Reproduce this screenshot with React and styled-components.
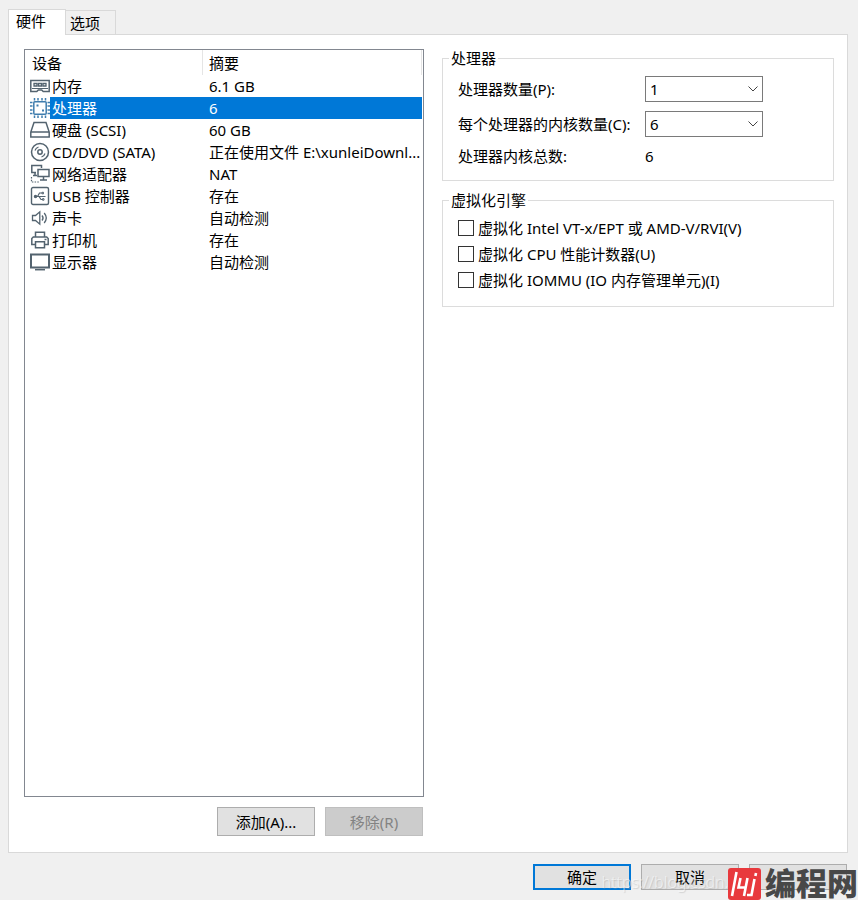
import React, { useState } from 'react';
import styled, { createGlobalStyle, css } from 'styled-components';

const GlobalStyles = createGlobalStyle`
  * {
    box-sizing: border-box;
  }
  body {
    margin: 0;
    background-color: #f0f0f0;
  }
  body,
  button,
  select {
    font-family: 'Noto Sans', 'Noto Sans CJK SC', sans-serif;
    font-size: 15px;
    font-weight: 400;
    line-height: 20px;
    color: #000;
  }
`;

const Dialog = styled.main`
  position: relative;
  display: flex;
  flex-direction: column;
  min-height: 100vh;
  padding: 9px 10px 10px 8px;
`;

const TabList = styled.div`
  display: flex;
  align-items: flex-end;
`;

const Tab = styled.button`
  height: 24px;
  padding: 0 15px 0 4px;
  border: 1px solid #d9d9d9;
  border-left: none;
  border-bottom: none;
  background-color: #f0f0f0;
  ${({ $active }) =>
    $active &&
    css`
      z-index: 1;
      height: 26px;
      margin-bottom: -1px;
      padding: 0 19px 3px 7px;
      border-left: 1px solid #d9d9d9;
      background-color: #fff;
    `}
`;

const Panel = styled.section`
  flex: 1;
  display: grid;
  grid-template-columns: minmax(0, 50fr) minmax(0, 49fr);
  gap: 18px;
  padding: 14px 13px 16px 15px;
  border: 1px solid #d9d9d9;
  background-color: #fff;
`;

const DeviceColumn = styled.div`
  display: flex;
  flex-direction: column;
  gap: 10px;
`;

const DeviceList = styled.div`
  flex: 1;
  padding-right: 1px;
  border: 1px solid #828790;
`;

const DeviceTable = styled.table`
  width: 100%;
  table-layout: fixed;
  border-spacing: 0;
  .col-icon {
    width: 25px;
  }
  .col-name {
    width: 153px;
  }
  th {
    height: 25px;
    padding: 0 7px;
    border-right: 1px solid #e5e5e5;
    font-weight: 400;
    text-align: left;
  }
  th + th {
    padding: 0 6px;
  }
`;

const DeviceRow = styled.tr`
  cursor: default;
  td {
    height: 22px;
    padding: 0 0 1px 6px;
    overflow: hidden;
    white-space: nowrap;
    text-overflow: ellipsis;
  }
  td:nth-child(1) {
    padding: 0 0 0 5px;
  }
  td:nth-child(2) {
    padding-left: 2px;
  }
  ${({ $selected }) =>
    $selected &&
    css`
      td:not(:first-child) {
        background-color: #0078d7;
        color: #fff;
      }
    `}
`;

const Icon = styled.svg`
  display: block;
  width: 20px;
  height: 20px;
  fill: none;
  stroke: ${({ $color }) => $color || '#53636f'};
  stroke-width: 1.5;
`;

const ButtonRow = styled.div`
  display: flex;
  justify-content: flex-end;
  gap: 10px;
  margin-right: 1px;
`;

const Footer = styled(ButtonRow)`
  margin-top: 11px;
`;

const Button = styled.button`
  width: 98px;
  height: ${({ $tall }) => ($tall ? '29px' : '26px')};
  padding: 0;
  border: ${({ $primary }) =>
    $primary ? '2px solid #0078d7' : '1px solid #adadad'};
  background-color: #e1e1e1;
  &:disabled {
    border-color: #bfbfbf;
    background-color: #ccc;
    color: #838383;
  }
`;

const Settings = styled.div`
  display: flex;
  flex-direction: column;
  gap: 9px;
  margin-top: -1px;
`;

const Group = styled.fieldset`
  min-width: 0;
  margin: 0;
  padding: 0 6px 13px;
  border: 1px solid #dcdcdc;
  legend {
    padding: 0 2px;
  }
`;

const Fields = styled.div`
  display: grid;
  grid-template-columns: 187px 118px;
  align-items: center;
  row-gap: 9px;
  padding: 8px 0 1px 9px;
  white-space: nowrap;
`;

const SelectBox = styled.div`
  display: grid;
  align-items: center;
  select,
  svg {
    grid-area: 1 / 1;
  }
  select {
    appearance: none;
    width: 100%;
    height: 26px;
    padding: 0 24px 0 4px;
    border: 1px solid #7a7a7a;
    border-radius: 0;
    background-color: #fff;
  }
  svg {
    justify-self: end;
    margin-right: 5px;
    pointer-events: none;
  }
`;

const CheckList = styled.div`
  padding: 5px 0 0 9px;
`;

const CheckLabel = styled.label`
  display: flex;
  align-items: center;
  gap: 4px;
  min-height: 26px;
  input {
    appearance: none;
    flex: none;
    width: 16px;
    height: 16px;
    margin: 0;
    border: 1px solid #333;
    background-color: #fff;
  }
  input:checked {
    background-color: #0078d7;
    box-shadow: inset 0 0 0 2px #fff;
  }
`;

const Watermark = styled.div`
  position: absolute;
  right: 120px;
  bottom: 8px;
  font-size: 16px;
  font-weight: 300;
  color: rgba(255, 255, 255, 0.6);
  text-shadow: 1px 1px 1px rgba(150, 150, 150, 0.4);
  pointer-events: none;
`;

const Brand = styled.div`
  position: absolute;
  right: 0;
  bottom: 0;
  display: flex;
  gap: 4px;
  height: 32px;
  font-family: 'Noto Sans CJK SC', sans-serif;
  font-size: 31px;
  font-weight: 900;
  line-height: 28px;
  color: #484848;
  pointer-events: none;
`;

const drawings = {
  memory: (
    <>
      <path d="M.8 4.5h18.4v11h-6L11.7 14H8.3l-1.5 1.5h-6z" />
      <path
        d="M4 7.5h3V10H4zM8.500 7.5h3V10h-3zM13 7.5h3V10h-3z"
        strokeWidth="1.3"
      />
      <path d="M2 12.5h16" strokeWidth="1" />
    </>
  ),
  cpu: (
    <>
      <rect x="3.8" y="3.8" width="12.4" height="12.4" rx="1" />
      <path d="M4.5 0v2.5M8 0v2.5M12 0v2.5M15.5 0v2.5M4.5 17.5V20M8 17.5V20M12 17.5V20M15.5 17.5V20M0 4.5h2.5M0 8h2.5M0 12h2.5M0 15.5h2.5M17.5 4.5H20M17.5 8H20M17.5 12H20M17.5 15.5H20" />
      <path d="M6.5 7.5h2M12 12.5h2" strokeWidth="2" />
    </>
  ),
  disk: <path d="M4 2.5h12l3.2 9.5v5H.8v-5zM.8 12h18.4" />,
  disc: (
    <>
      <circle cx="10" cy="10" r="8.5" />
      <circle cx="10" cy="10" r="2.2" />
      <path
        d="M5 8.500c.5-1.800 1.800-3 3.500-3.500M15 11.500c-.5 1.800-1.800 3-3.500 3.500"
        strokeWidth="1.2"
      />
    </>
  ),
  network: (
    <>
      <path d="M11.5 4V1.5H1.800v7H6M5 8.500V11M3 11.500h4" />
      <path d="M8 5.500h11v7H8zM13.500 12.500V16M10 16h7" />
      <path d="M1.500 13v5h8" strokeWidth="1.2" strokeDasharray="1.5 1.2" />
    </>
  ),
  usb: (
    <>
      <rect x="1.5" y="1.5" width="17" height="17" rx="1.5" strokeWidth="1.4" />
      <path d="M5 10.500h10.500M7.500 10.500l2-3.500H12M9 10.500l2 3h2" strokeWidth="1.2" />
      <path
        d="M12 6.300h1.500v1.500H12zM12.500 12.700H14v1.500h-1.500z"
        strokeWidth="1"
      />
      <circle cx="5.5" cy="10.5" r="1" />
    </>
  ),
  sound: (
    <path
      d="M2.500 7.500v5h3l4.300 3.700V3.800L5.500 7.500zM12 7.500c1.300 1.500 1.300 3.500 0 5M14.200 5c2.500 3 2.500 7 0 10"
      strokeWidth="1.3"
    />
  ),
  printer: (
    <>
      <path d="M5.500 7V2.300h9V7M5.500 14.500H1.800v-6L3.300 7h13.400l1.500 1.500v6h-3.700" />
      <path d="M5.500 11.800h9v5.900h-9zM14.500 9.500h2" />
    </>
  ),
  display: (
    <>
      <path d="M1 2.500h18v13H1z" strokeWidth="2" />
      <path d="M5 17.700h10" />
    </>
  ),
};

const devices = [
  { icon: 'memory', name: '内存', summary: '6.1 GB' },
  { icon: 'cpu', name: '处理器', summary: '6', color: '#3f7dae' },
  { icon: 'disk', name: '硬盘 (SCSI)', summary: '60 GB' },
  {
    icon: 'disc',
    name: 'CD/DVD (SATA)',
    summary: '正在使用文件 E:\\xunleiDownl...',
  },
  { icon: 'network', name: '网络适配器', summary: 'NAT' },
  { icon: 'usb', name: 'USB 控制器', summary: '存在' },
  { icon: 'sound', name: '声卡', summary: '自动检测' },
  { icon: 'printer', name: '打印机', summary: '存在' },
  { icon: 'display', name: '显示器', summary: '自动检测' },
];

const engineOptions = [
  '虚拟化 Intel VT-x/EPT 或 AMD-V/RVI(V)',
  '虚拟化 CPU 性能计数器(U)',
  '虚拟化 IOMMU (IO 内存管理单元)(I)',
];

function Select({ id, value, onChange, options }) {
  return (
    <SelectBox>
      <select
        id={id}
        value={value}
        onChange={(e) => onChange(Number(e.target.value))}
      >
        {options.map((n) => (
          <option key={n}>{n}</option>
        ))}
      </select>
      <svg width="10" height="6" viewBox="0 0 10 6" fill="none" stroke="#444">
        <path d="M.5.5L5 5 9.5.5" />
      </svg>
    </SelectBox>
  );
}

function BrandMark() {
  return (
    <svg width="33" height="32" viewBox="0 0 33 32">
      <rect width="33" height="32" rx="3" fill="#e8393d" />
      <g fill="none" stroke="#fff" strokeWidth="2.6">
        <path d="M8.500 4L4 28M12.500 10l-2 9.500h6.500M19.500 10L16 28M26.500 11L23.500 27H19" />
        <path d="M28 5l-.6 3" />
      </g>
    </svg>
  );
}

function App() {
  const [selected, setSelected] = useState('cpu');
  const [processors, setProcessors] = useState(1);
  const [cores, setCores] = useState(6);

  return (
    <Dialog>
      <GlobalStyles />
      <TabList role="tablist">
        <Tab role="tab" aria-selected="true" $active>
          硬件
        </Tab>
        <Tab role="tab" aria-selected="false">
          选项
        </Tab>
      </TabList>
      <Panel role="tabpanel">
        <DeviceColumn>
          <DeviceList>
            <DeviceTable>
              <colgroup>
                <col className="col-icon" />
                <col className="col-name" />
                <col />
              </colgroup>
              <thead>
                <tr>
                  <th colSpan={2}>设备</th>
                  <th>摘要</th>
                </tr>
              </thead>
              <tbody>
                {devices.map(({ icon, name, summary, color }) => (
                  <DeviceRow
                    key={icon}
                    $selected={icon === selected}
                    onClick={() => setSelected(icon)}
                  >
                    <td>
                      <Icon viewBox="0 0 20 20" $color={color}>
                        {drawings[icon]}
                      </Icon>
                    </td>
                    <td>{name}</td>
                    <td>{summary}</td>
                  </DeviceRow>
                ))}
              </tbody>
            </DeviceTable>
          </DeviceList>
          <ButtonRow>
            <Button $tall>添加(A)...</Button>
            <Button $tall disabled>
              移除(R)
            </Button>
          </ButtonRow>
        </DeviceColumn>
        <Settings>
          <Group>
            <legend>处理器</legend>
            <Fields>
              <label htmlFor="processors">处理器数量(P):</label>
              <Select
                id="processors"
                value={processors}
                onChange={setProcessors}
                options={[1, 2, 4, 8]}
              />
              <label htmlFor="cores">每个处理器的内核数量(C):</label>
              <Select
                id="cores"
                value={cores}
                onChange={setCores}
                options={[1, 2, 4, 6, 8]}
              />
              <span>处理器内核总数:</span>
              <output htmlFor="processors cores">{processors * cores}</output>
            </Fields>
          </Group>
          <Group>
            <legend>虚拟化引擎</legend>
            <CheckList>
              {engineOptions.map((option) => (
                <CheckLabel key={option}>
                  <input type="checkbox" />
                  {option}
                </CheckLabel>
              ))}
            </CheckList>
          </Group>
        </Settings>
      </Panel>
      <Footer>
        <Button $primary>确定</Button>
        <Button>取消</Button>
        <Button aria-label="帮助" />
      </Footer>
      <Watermark>https://blog.csdn.n</Watermark>
      <Brand>
        <BrandMark />
        编程网
      </Brand>
    </Dialog>
  );
}

export default App;
